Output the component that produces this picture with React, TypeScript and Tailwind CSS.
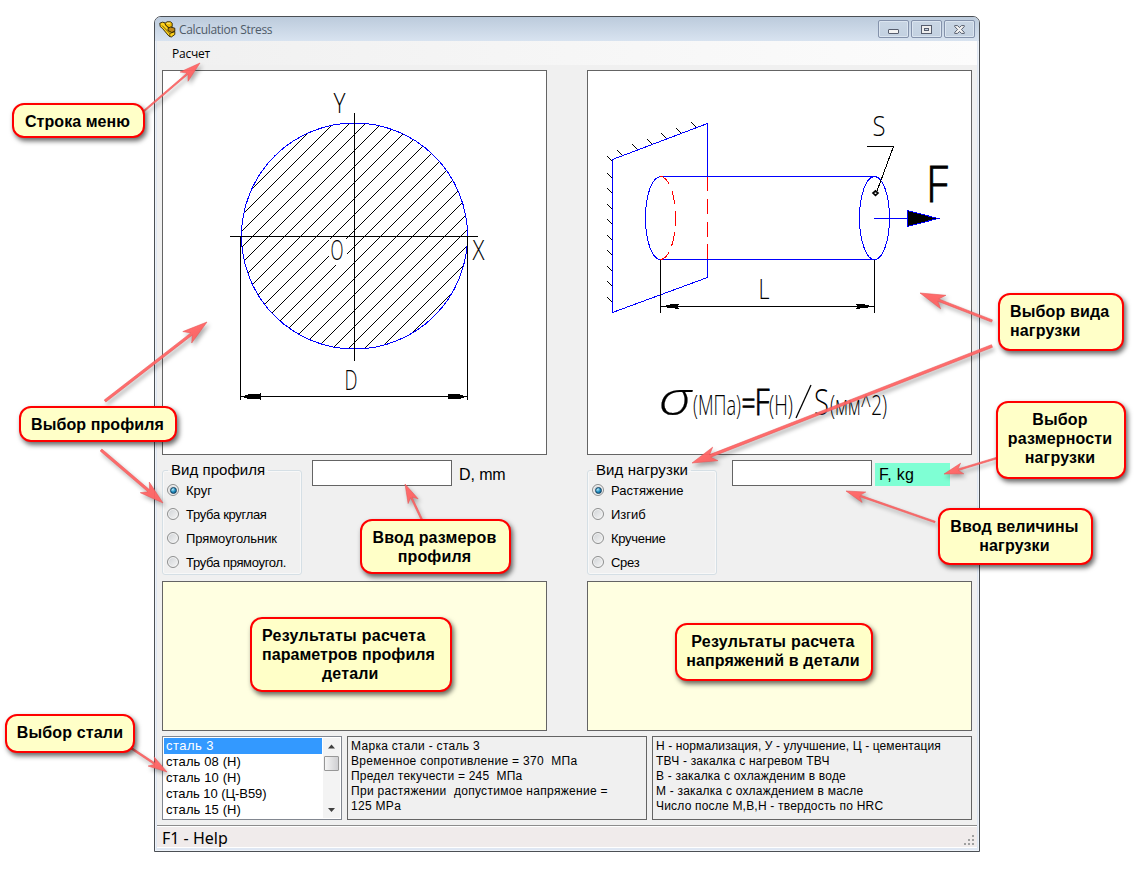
import { type ReactNode } from "react";

function T({ className = "", children }: { className?: string; children: ReactNode }) {
  return <span className={"block w-fit whitespace-pre " + className}>{children}</span>;
}

function AppIcon() {
  return (
    <svg width="17" height="17" viewBox="0 0 17 17" className="shrink-0">
      <g stroke="#2a2000" strokeWidth="0.9" strokeLinejoin="round">
        <path d="M.8 2.2 L3.6 1.2 L6.5 2 L7.5 5 L11.5 8.5 L15.8 10.5 L15.8 13.5 L12.3 16 L10 15.2 L3.5 7.5 L1.2 5.6 Z" fill="#ffd21c" />
        <path d="M5.8 2.6 L8 .8 L11.5 .8 L13.2 2.2 L13.2 5.6 L10.5 7 L7.5 5 Z" fill="#f0bd08" />
        <path d="M9 7.5 L11.5 6 L15.8 7.2 L15.8 10.2 L12.8 11.5 L9 9.5 Z" fill="#c08a18" />
        <path d="M3 4.5 L10.8 12.4 L15.5 10.8 M10.8 12.4 L10.8 15" fill="none" strokeWidth="0.7" />
      </g>
      <path d="M7.8 2.2H11" stroke="#ffef80" />
    </svg>
  );
}

function WinButton({ children }: { children: ReactNode }) {
  return (
    <div className="flex h-[18px] w-[31px] items-center justify-center rounded-[2px] border border-[#8492ab] bg-linear-to-b from-[#c9d6e4] to-[#c3d1e1] shadow-[inset_0_0_0_1px_#dbe5f0]">
      {children}
    </div>
  );
}

function Radio({ on, className = "", children }: { on?: boolean; className?: string; children: ReactNode }) {
  return (
    <div className="flex h-6 items-center">
      <span className="mr-[7px] flex h-3 w-3 items-center justify-center rounded-full border border-[#8e8f8f] bg-linear-to-br from-[#cfd2d5] to-[#f6f6f6] shadow-[inset_0_0_0_1px_#f4f4f4]">
        {on && <span className="h-[7px] w-[7px] rounded-full border border-[#12405f] bg-[radial-gradient(circle_at_35%_30%,#b9ecfb,#1f8dc0_50%,#0c4a75)]" />}
      </span>
      <T className={"pt-[2px] text-[13px] " + className}>{children}</T>
    </div>
  );
}

const HATCH = Array.from({ length: 20 }, (_, i) => Math.round(134.3 + (i - 3) * 15.95));
const CAD = "'Open Sans', 'Noto Sans', sans-serif";

function CadText({ x, y, w, size, bold = 0, children }: { x: number; y: number; w: number; size: number; bold?: number; children: string }) {
  return (
    <text x={x} y={y} textLength={w} lengthAdjust="spacingAndGlyphs" fontSize={size} fontWeight={300} fontFamily={CAD} fill="#000" stroke="#000" strokeWidth={bold}>
      {children}
    </text>
  );
}

function CircleDrawing() {
  return (
    <svg width="383" height="383" viewBox="163 71 383 383" className="block">
      <defs>
        <clipPath id="disc">
          <circle cx="354.5" cy="236" r="113" />
        </clipPath>
      </defs>
      <g shapeRendering="crispEdges" fill="none" stroke="#000">
        <g clipPath="url(#disc)">
          {HATCH.map((y) => (
            <line key={y} x1={234.5} y1={y + 120.5} x2={474.5} y2={y - 119.5} />
          ))}
          <rect x="329" y="239" width="18" height="26" fill="#fff" stroke="none" />
        </g>
        <circle cx="354.5" cy="236" r="113" stroke="#00f" />
        <path d="M354.5 113V361M230 236.5H478M240.5 237V400M467.5 237V400M241 396.5H467" />
        <path d="M243 396.5L248 395L260 394V399L248 398.5ZM465 396.5L460 395L448 394V399L460 398.5Z" fill="#000" />
      </g>
      <CadText x={333.5} y={113} w={12} size={28}>Y</CadText>
      <CadText x={472.5} y={260} w={12} size={28}>X</CadText>
      <CadText x={330.5} y={259.5} w={13} size={28}>O</CadText>
      <CadText x={344.5} y={390} w={13} size={28}>D</CadText>
    </svg>
  );
}

const TOP_TICKS = [[696.5, 127.5], [681.5, 133.5], [666.5, 138.5], [652.5, 144.5], [637.5, 149.5], [622.5, 155.5]];
const SIDE_TICKS = [161.5, 178.5, 193.5, 209.5, 224.5, 240.5, 255.5, 271.5, 286.5, 302.5];

function LoadDrawing() {
  return (
    <svg width="383" height="383" viewBox="588 71 383 383" className="block">
      <g shapeRendering="crispEdges" fill="none" stroke="#000">
        {TOP_TICKS.map(([x, y]) => (
          <path key={x} d={`M${x} ${y}l-5 -5`} />
        ))}
        {SIDE_TICKS.map((y) => (
          <path key={y} d={`M612.5 ${y}l-5 -5`} />
        ))}
        <path d="M707.5 176V123.5L612.5 159.5V312.5L707.5 277.5V259" stroke="#00f" />
        <path d="M707.5 176V191M707.5 199V214M707.5 222V237M707.5 244V259" stroke="#f00" />
        <path d="M660.5 176.5H875M658 259.5H875M660.5 176.5C652 177 645.5 195 645.5 218S652 259 660.5 259.5" stroke="#00f" />
        <path d="M660.5 176.5C669 177 675.5 195 675.5 218S669 259 660.5 259.5" stroke="#f00" strokeDasharray="14 7" strokeDashoffset="2" />
        <ellipse cx="874.5" cy="218" rx="15" ry="41.5" stroke="#00f" />
        <path d="M874 218.5H908" stroke="#00f" />
        <path d="M907.5 210.5V226.5L938 218.5Z" fill="#000" stroke="#00f" />
        <path d="M867 146.5H893.5L877 191M660.5 260V313M874.5 260V313M661 306.5H874" />
        <path d="M662 306.5L670 304.5L680 304L677 306.5L680 309L670 308ZM873 306.5L865 304.5L855 304L858 306.5L855 309L865 308Z" fill="#000" stroke="none" />
      </g>
      <path d="M875.5 190.8L878 193L875.5 195.4L873 193Z" fill="none" stroke="#000" strokeWidth="1.7" />
      <CadText x={758.5} y={299} w={11} size={28}>L</CadText>
      <CadText x={872.5} y={136} w={13} size={28}>S</CadText>
      <CadText x={926} y={201.5} w={22} size={50} bold={1}>F</CadText>
      <text x="658.5" y="415" textLength="33" lengthAdjust="spacingAndGlyphs" fontSize="46" fontStyle="italic" fontWeight="300" fontFamily={CAD} stroke="#000" strokeWidth="0.2">σ</text>
      <CadText x={693} y={415} w={48} size={28}>(МПа)</CadText>
      <CadText x={741.5} y={415} w={14} size={34} bold={0.8}>=</CadText>
      <CadText x={754.5} y={415} w={15} size={36} bold={0.8}>F</CadText>
      <CadText x={769} y={415} w={24} size={28}>(Н)</CadText>
      <path d="M796 418L811 385" stroke="#000" strokeWidth="1.3" />
      <CadText x={814} y={415} w={15} size={36}>S</CadText>
      <CadText x={830} y={415} w={57} size={28}>(мм^2)</CadText>
    </svg>
  );
}

function Arrow({ x1, y1, x2, y2, t = 2, h = 21 }: { x1: number; y1: number; x2: number; y2: number; t?: number; h?: number }) {
  const len = Math.hypot(x2 - x1, y2 - y1);
  const angle = (Math.atan2(y2 - y1, x2 - x1) * 180) / Math.PI;
  const s = t / 2;
  const n = len - h * 0.78;
  return (
    <path
      transform={`translate(${x1} ${y1}) rotate(${angle})`}
      d={`M0 ${-s}L${n} ${-s}L${len - h} ${-h * 0.29}L${len} 0L${len - h} ${h * 0.29}L${n} ${s}L0 ${s}Z`}
    />
  );
}

function Callout({ className, children }: { className: string; children: ReactNode }) {
  return (
    <div className={"absolute flex flex-col rounded-[12px] border-2 border-[#f00] bg-[#ffffc8] text-[16px] leading-[19px] font-bold tracking-[0.15px] text-black shadow-[2px_3px_5px_rgba(0,0,0,0.6)] " + className}>
      {children}
    </div>
  );
}

const STEELS = ["сталь 3", "сталь 08 (Н)", "сталь 10 (Н)", "сталь 10 (Ц-В59)", "сталь 15 (Н)"];

export default function App() {
  return (
    <div className="relative h-[877px] w-[1134px] overflow-hidden bg-white pt-4 pl-[154px] font-['Liberation_Sans',Arial,sans-serif] text-black">
      <div className="flex h-[836px] w-[826px] flex-col rounded-t-[7px] border border-[#4b4f54] bg-[#dfe7f3] shadow-[inset_0_0_0_1px_#eef3f9]">
        <div className="flex h-6 shrink-0 items-center rounded-t-[6px] bg-linear-to-b from-[#bccbdc] to-[#d8e3f0] pr-[4px] pl-[4px]">
          <AppIcon />
          <T className="ml-[3px] pt-[2px] font-['Open_Sans',sans-serif] text-[12px] tracking-[-0.32px] text-[#4f5b68]">Calculation Stress</T>
          <div className="ml-auto flex gap-[2px]">
            <WinButton>
              <span className="mt-1 h-[5px] w-[11px] rounded-[1px] border border-[#565d6d] bg-[#f3f3f3]" />
            </WinButton>
            <WinButton>
              <svg width="11" height="9" viewBox="0 0 11 9" shapeRendering="crispEdges">
                <path d="M.5 .5H10.5V8.5H.5ZM3.5 3.5V5.5H7.5V3.5Z" fill="#eee" stroke="#565d6d" fillRule="evenodd" />
              </svg>
            </WinButton>
            <WinButton>
              <svg width="11" height="9" viewBox="0 0 11 9">
                <path d="M.7 .6H3.6L5.5 2.6L7.4 .6H10.3V1.6L7.4 4.5L10.3 7.4V8.4H7.4L5.5 6.4L3.6 8.4H.7V7.4L3.6 4.5L.7 1.6Z" fill="#f3f3f3" stroke="#565d6d" />
              </svg>
            </WinButton>
          </div>
        </div>
        <div className="mx-[2px] flex min-h-0 flex-1 flex-col bg-[#f0f0f0]">
          <div className="flex h-6 shrink-0 items-center bg-linear-to-r from-[#f0f0f0] to-[#fcfcfc] pl-[15px]">
            <T className="pt-px font-['Open_Sans',sans-serif] text-[12px] tracking-[-0.25px]">Расчет</T>
          </div>
          <div className="mt-[5px] flex shrink-0 justify-between px-[5px]">
            <div className="h-[385px] w-[385px] border border-[#646464] bg-white"><CircleDrawing /></div>
            <div className="h-[385px] w-[385px] border border-[#646464] bg-white"><LoadDrawing /></div>
          </div>
          <div className="mt-[5px] flex h-[121px] shrink-0 justify-between px-[5px]">
            <div className="flex w-[385px] items-start">
              <fieldset className="mt-[2px] h-[113px] w-[140px] rounded-[3px] border border-[#d5dfe5] pl-[4px] text-[15px] shadow-[inset_0_0_0_1px_#f8f8f8]">
                <legend className="ml-[1px] h-4 px-[3px] leading-4"><T className="tracking-[0.05px]">Вид профиля</T></legend>
                <Radio on>Круг</Radio>
                <Radio className="tracking-[-0.3px]">Труба круглая</Radio>
                <Radio className="tracking-[-0.07px]">Прямоугольник</Radio>
                <Radio className="tracking-[-0.33px]">Труба прямоугол.</Radio>
              </fieldset>
              <div className="ml-[10px] h-[26px] w-[140px] border border-[#646464] bg-white" />
              <T className="mt-[5px] ml-[7px] text-[16px] leading-5 tracking-[-0.1px]">D, mm</T>
            </div>
            <div className="flex w-[385px] items-start">
              <fieldset className="mt-[2px] h-[113px] w-[130px] rounded-[3px] border border-[#d5dfe5] pl-[4px] text-[15px] shadow-[inset_0_0_0_1px_#f8f8f8]">
                <legend className="ml-[1px] h-4 px-[3px] leading-4"><T className="tracking-[0.1px]">Вид нагрузки</T></legend>
                <Radio on>Растяжение</Radio>
                <Radio>Изгиб</Radio>
                <Radio className="tracking-[-0.3px]">Кручение</Radio>
                <Radio className="tracking-[-0.3px]">Срез</Radio>
              </fieldset>
              <div className="ml-[15px] h-[26px] w-[140px] border border-[#646464] bg-white" />
              <div className="mt-[3px] ml-[3px] h-[23px] w-[75px] bg-[#7fffd4] pl-[4px] text-[16px] leading-[23px]"><T className="tracking-[0.3px]">F, kg</T></div>
            </div>
          </div>
          <div className="flex shrink-0 justify-between px-[5px]">
            <div className="h-[150px] w-[385px] border border-[#646464] bg-[#ffffe1]" />
            <div className="h-[150px] w-[385px] border border-[#646464] bg-[#ffffe1]" />
          </div>
          <div className="mt-[5px] flex shrink-0 gap-[5px] px-[5px]">
            <div className="flex h-[84px] w-[180px] border border-[#828790] bg-white p-px">
              <div className="flex flex-1 flex-col text-[13px] leading-4 tracking-[0.12px]">
                {STEELS.map((s, i) => (
                  <div key={s} className={i === 0 ? "h-4 bg-[#3399ff] pl-[2px] tracking-[0.45px] text-white" : "h-4 pl-[2px]"}>
                    <T className={i === 3 ? "tracking-[-0.05px]" : ""}>{s}</T>
                  </div>
                ))}
              </div>
              <div className="ml-px flex w-[17px] flex-col items-center bg-[#f3f3f3]">
                <svg width="17" height="18" viewBox="0 0 17 18"><path d="M5 10.5L8.5 6.5L12 10.5Z" fill="#404040" /></svg>
                <div className="h-[15px] w-[15px] rounded-[1px] border border-[#979797] bg-linear-to-r from-[#f5f5f5] to-[#cfcfd2]" />
                <svg width="17" height="17" viewBox="0 0 17 17" className="mt-auto"><path d="M5 7L8.5 11L12 7Z" fill="#404040" /></svg>
              </div>
            </div>
            <div className="flex h-[84px] w-[300px] flex-col border border-[#646464] pt-[2px] pl-[3px] text-[12px] leading-[15px] tracking-[0.3px]">
              <T>Марка стали - сталь 3</T>
              <T>Временное сопротивление = 370  МПа</T>
              <T className="tracking-[0.22px]">Предел текучести = 245  МПа</T>
              <T>При растяжении  допустимое напряжение =</T>
              <T>125 MPa</T>
            </div>
            <div className="flex h-[84px] w-[320px] flex-col border border-[#646464] pt-[2px] pl-[3px] text-[12px] leading-[15px] tracking-[0.2px]">
              <T className="tracking-[0.11px]">Н - нормализация, У - улучшение, Ц - цементация</T>
              <T>ТВЧ - закалка с нагревом ТВЧ</T>
              <T>В - закалка с охлажденим в воде</T>
              <T>М - закалка с охлаждением в масле</T>
              <T>Число после М,В,Н - твердость по HRC</T>
            </div>
          </div>
          <div className="mt-[5px] flex min-h-0 flex-1 items-center border-t border-[#8c8c8c] bg-[#f0ebeb] pl-[5px] shadow-[inset_0_1px_0_#fff]">
            <T className="pt-[3px] font-['Noto_Sans',sans-serif] text-[16px] leading-[18px]">F1 - Help</T>
            <svg width="11" height="11" viewBox="0 0 11 11" shapeRendering="crispEdges" className="mt-auto mr-[2px] mb-[1px] ml-auto">
              <path d="M8 0h2v2h-2zM4 4h2v2h-2zM8 4h2v2h-2zM0 8h2v2h-2zM4 8h2v2h-2zM8 8h2v2h-2z" fill="#a0a0a0" />
            </svg>
          </div>
        </div>
        <div className="mx-[2px] h-[4px] shrink-0 border-t border-white" />
      </div>

      <svg width="1134" height="877" viewBox="0 0 1134 877" className="pointer-events-none absolute top-0 left-0 drop-shadow-[2px_3px_2px_rgba(0,0,0,0.35)]">
        <g fill="#ff6464" fillOpacity="0.95" stroke="#e85555" strokeWidth="0.5">
          <Arrow x1={144} y1={111} x2={200} y2={63} t={1.6} />
          <Arrow x1={105} y1={401} x2={207} y2={322} t={2.6} h={25} />
          <Arrow x1={101} y1={450} x2={163} y2={503} t={2.6} h={24} />
          <Arrow x1={422} y1={520} x2={405} y2={484} t={1.6} h={19} />
          <Arrow x1={992} y1={321} x2={920} y2={293} t={2.4} h={25} />
          <Arrow x1={992} y1={346} x2={692} y2={463} t={2.8} h={25} />
          <Arrow x1={997} y1={458} x2={944} y2={474} t={1.6} h={19} />
          <Arrow x1={935} y1={522} x2={846} y2={491} t={1.6} h={19} />
          <Arrow x1={131} y1={748} x2={167} y2={772} t={1.8} h={19} />
        </g>
      </svg>

      <Callout className="top-[103px] left-[12px] h-[35px] w-[133px] pt-[7px] pl-[11px]"><T className="tracking-[0.05px]">Строка меню</T></Callout>
      <Callout className="top-[406px] left-[19px] h-[36px] w-[158px] pt-[7px] pl-[10px]"><T className="tracking-[0.1px]">Выбор профиля</T></Callout>
      <Callout className="top-[519px] left-[360px] h-[55px] w-[151px] items-center pt-[7px] pr-[2px]"><T>Ввод размеров</T><T>профиля</T></Callout>
      <Callout className="top-[293px] left-[998px] h-[58px] w-[126px] pt-[7px] pl-[10px]"><T>Выбор вида</T><T>нагрузки</T></Callout>
      <Callout className="top-[401px] left-[996px] h-[78px] w-[130px] items-center pt-[7px] pr-[2px]"><T>Выбор</T><T>размерности</T><T>нагрузки</T></Callout>
      <Callout className="top-[508px] left-[938px] h-[57px] w-[155px] items-center pt-[7px] pr-[2px]"><T>Ввод величины</T><T>нагрузки</T></Callout>
      <Callout className="top-[617px] left-[250px] h-[75px] w-[202px] pt-[7px] pl-[10px]"><T className="tracking-[0.28px]">Результаты расчета</T><T className="tracking-[0.05px]">параметров профиля</T><T className="ml-[60px]">детали</T></Callout>
      <Callout className="top-[623px] left-[675px] h-[58px] w-[198px] items-center pt-[7px] pr-[2px]"><T className="tracking-[0.28px]">Результаты расчета</T><T>напряжений в детали</T></Callout>
      <Callout className="top-[714px] left-[5px] h-[39px] w-[130px] items-center pt-[7px]"><T>Выбор стали</T></Callout>
    </div>
  );
}
